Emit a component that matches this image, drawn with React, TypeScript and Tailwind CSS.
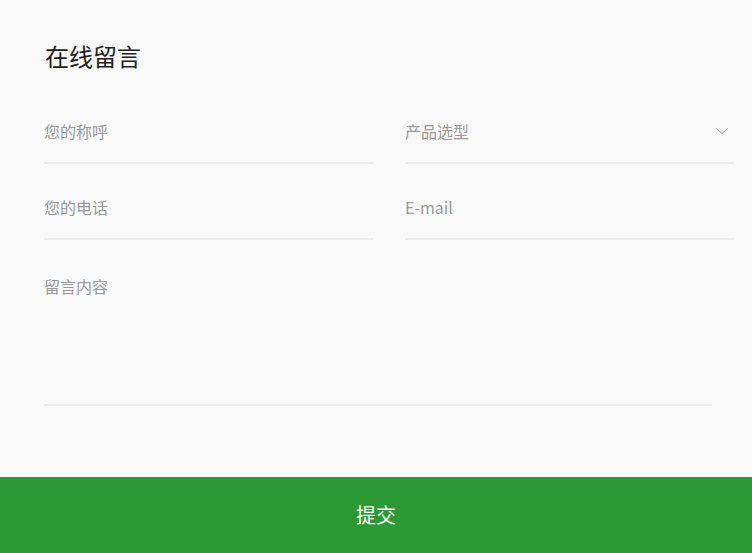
import { ChevronDown } from "lucide-react";

const font = { fontFamily: '"Noto Sans CJK SC", "Noto Sans", sans-serif' };

function Field({ label, select }: { label: string; select?: boolean }) {
  return (
    <div className="flex h-[64px] items-center justify-between border-b-2 border-[#ececec]">
      <span className="text-[16px] text-[#999]">{label}</span>
      {select && <ChevronDown className="mr-[1px] h-[22px] w-[22px] text-[#aaa]" strokeWidth={1.1} />}
    </div>
  );
}

export default function App() {
  return (
    <div className="flex h-[553px] w-[752px] flex-col bg-[#f9f9f9]" style={font}>
      <div className="flex-1 pl-[44px] pr-[18px] pt-[38px]">
        <h2 className="ml-[1px] text-[24px] leading-[36px] text-[#222]">在线留言</h2>
        <div className="mt-[26px] grid grid-cols-2 gap-x-[32px] gap-y-[12px]">
          <Field label="您的称呼" />
          <Field label="产品选型" select />
          <Field label="您的电话" />
          <Field label="E-mail" />
        </div>
        <div className="mt-[12px] h-[154px] w-[668px] border-b-2 border-[#ececec] pt-[22px] text-[16px] text-[#999]">
          留言内容
        </div>
      </div>
      <button className="h-[76px] w-full bg-[#2b9a35] text-[20px] text-white">提交</button>
    </div>
  );
}
